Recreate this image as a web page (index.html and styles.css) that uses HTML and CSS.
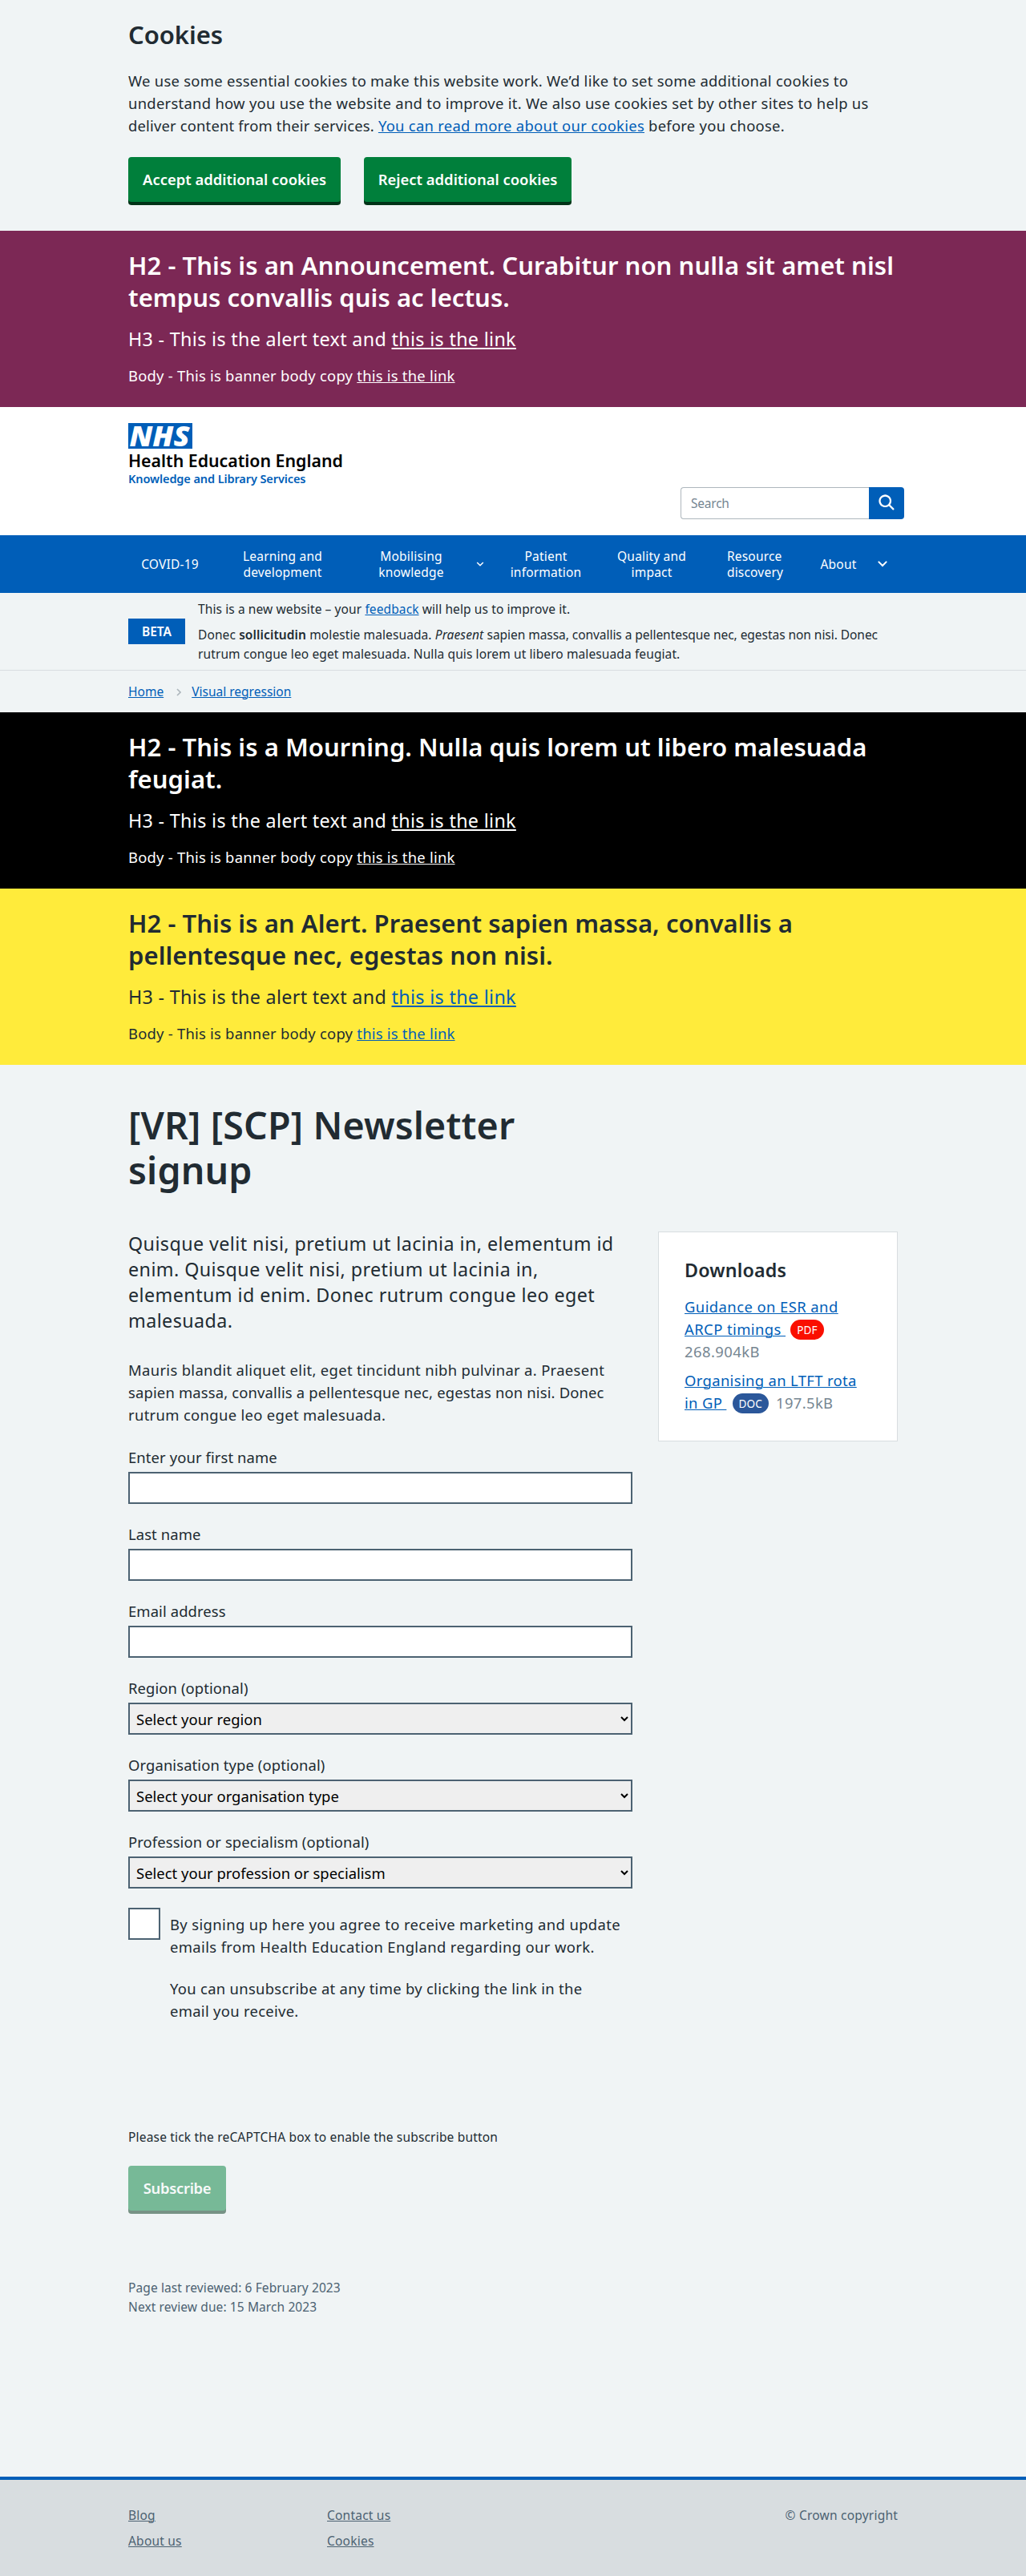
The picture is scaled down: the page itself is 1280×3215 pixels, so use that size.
FILE: index.html
```
<!DOCTYPE html>
<html lang="en">
<head>
<meta charset="utf-8">
<title>[VR] [SCP] Newsletter signup</title>
<link rel="stylesheet" href="styles.css">
</head>
<body>
<section class="cookies">
  <div class="container">
    <h2 class="heading">Cookies</h2>
    <p class="body-text">We use some essential cookies to make this website work. We’d like to set some additional cookies to understand how you use the website and to improve it. We also use cookies set by other sites to help us <span class="tight">deliver content from their services.</span> <a href="#">You can read more about our cookies</a> before you choose.</p>
    <div class="cookie-actions">
      <button class="button" type="button">Accept additional cookies</button>
      <button class="button reject" type="button">Reject additional cookies</button>
    </div>
  </div>
</section>

<section class="banner announcement">
  <div class="container">
    <h2 class="heading">H2 - This is an Announcement. Curabitur non nulla sit amet nisl tempus convallis quis ac lectus.</h2>
    <h3 class="banner-lead">H3 - This is the alert text and <a href="#">this is the link</a></h3>
    <p class="banner-body">Body - This is banner body copy <a href="#">this is the link</a></p>
  </div>
</section>

<header class="header">
  <div class="container header-row">
    <a class="logo" href="#">
      <svg width="80" height="32" viewBox="0 0 80 32" role="img" aria-label="NHS">
        <rect width="80" height="32" fill="#005eb8"/>
        <text class="logo-mark" x="1.5" y="29" textLength="75" lengthAdjust="spacingAndGlyphs">NHS</text>
      </svg>
      <span class="logo-org">Health Education England</span>
      <span class="logo-service">Knowledge and Library Services</span>
    </a>
    <form class="search">
      <input class="search-input" type="search" placeholder="Search" aria-label="Search">
      <button class="search-button" type="button" aria-label="Submit search">
        <svg width="27" height="27" viewBox="0 0 24 24" fill="#fff"><path d="M19.71 18.29l-4.11-4.1a7 7 0 1 0-1.41 1.41l4.1 4.11a1 1 0 0 0 1.42 0 1 1 0 0 0 0-1.42zM5 10a5 5 0 1 1 5 5 5 5 0 0 1-5-5z"/></svg>
      </button>
    </form>
  </div>
</header>

<nav class="nav">
  <ul class="container nav-list">
    <li>COVID-19</li>
    <li>Learning and<br>development</li>
    <li>Mobilising<br>knowledge</li>
    <li><svg width="10" height="6" viewBox="0 0 10 6" fill="none" stroke="#fff" stroke-width="1.5"><path d="M1.2 1l3.8 3.8L8.8 1"/></svg></li>
    <li>Patient<br>information</li>
    <li>Quality and<br>impact</li>
    <li class="left">Resource<br>discovery</li>
    <li>About</li>
    <li><svg width="12" height="8" viewBox="0 0 12 8" fill="none" stroke="#fff" stroke-width="2" stroke-linecap="round"><path d="M1.4 1.4L6 6l4.600-4.600"/></svg></li>
  </ul>
</nav>

<section class="phase">
  <div class="container phase-row">
    <strong class="tag">BETA</strong>
    <div>
      <p class="phase-first">This is a new website – your <a href="#">feedback</a> will help us to improve it.</p>
      <p>Donec <b>sollicitudin</b> molestie malesuada. <em>Praesent</em> <span class="tight">sapien massa, convallis a pellentesque nec, egestas non nisi. Donec</span> rutrum congue leo eget malesuada. Nulla quis lorem ut libero malesuada feugiat.</p>
    </div>
  </div>
</section>

<nav class="breadcrumb">
  <div class="container breadcrumb-row">
    <a href="#">Home</a>
    <svg width="6" height="10" viewBox="0 0 6 10" fill="none" stroke="#aeb7bd" stroke-width="1.6"><path d="M1 1l4 4-4 4"/></svg>
    <a href="#">Visual regression</a>
  </div>
</nav>

<section class="banner mourning">
  <div class="container">
    <h2 class="heading">H2 - This is a Mourning. Nulla quis lorem ut libero malesuada feugiat.</h2>
    <h3 class="banner-lead">H3 - This is the alert text and <a href="#">this is the link</a></h3>
    <p class="banner-body">Body - This is banner body copy <a href="#">this is the link</a></p>
  </div>
</section>

<section class="banner alert">
  <div class="container">
    <h2 class="heading">H2 - This is an Alert. Praesent sapien massa, convallis a pellentesque nec, egestas non nisi.</h2>
    <h3 class="banner-lead">H3 - This is the alert text and <a href="#">this is the link</a></h3>
    <p class="banner-body">Body - This is banner body copy <a href="#">this is the link</a></p>
  </div>
</section>

<main class="container main">
  <h1 class="page-title">[VR] [SCP] Newsletter signup</h1>
  <div class="columns">
    <div class="content">
      <p class="lede">Quisque velit nisi, pretium ut lacinia in, elementum id enim. Quisque velit nisi, pretium ut lacinia in, elementum id enim. Donec rutrum congue leo eget malesuada.</p>
      <p class="intro">Mauris blandit aliquet elit, eget tincidunt nibh pulvinar a. Praesent <span class="tight">sapien massa, convallis a pellentesque nec, egestas non nisi. Donec</span> rutrum congue leo eget malesuada.</p>
      <form>
        <div class="field"><label for="first">Enter your first name</label><input class="control" id="first" type="text"></div>
        <div class="field"><label for="last">Last name</label><input class="control" id="last" type="text"></div>
        <div class="field"><label for="email">Email address</label><input class="control" id="email" type="email"></div>
        <div class="field"><label for="region">Region (optional)</label><select class="control" id="region"><option>Select your region</option></select></div>
        <div class="field"><label for="org">Organisation type (optional)</label><select class="control" id="org"><option>Select your organisation type</option></select></div>
        <div class="field"><label for="prof">Profession or specialism (optional)</label><select class="control" id="prof"><option>Select your profession or specialism</option></select></div>
        <div class="consent">
          <input class="checkbox" type="checkbox" id="consent">
          <label class="consent-text" for="consent"><span>By signing up here you agree to receive marketing and update emails from Health Education England regarding our work.</span><span>You can unsubscribe at any time by clicking the link in the email you receive.</span></label>
        </div>
        <p class="captcha-note">Please tick the reCAPTCHA box to enable the subscribe button</p>
        <button class="button subscribe" type="button" disabled>Subscribe</button>
      </form>
      <p class="review">Page last reviewed: 6 February 2023<br>Next review due: 15 March 2023</p>
    </div>
    <aside class="downloads">
      <h2 class="downloads-title">Downloads</h2>
      <p class="download"><a href="#">Guidance on ESR and ARCP timings&nbsp;</a> <span class="pill pdf">PDF</span> <span class="size">268.904kB</span></p>
      <p class="download"><a href="#">Organising an LTFT rota in GP&nbsp;</a> <span class="pill doc">DOC</span> <span class="size">197.5kB</span></p>
    </aside>
  </div>
</main>

<footer class="footer">
  <div class="container footer-row">
    <ul class="footer-links">
      <li><a href="#">Blog</a></li>
      <li><a href="#">Contact us</a></li>
      <li><a href="#">About us</a></li>
      <li><a href="#">Cookies</a></li>
    </ul>
    <p>© Crown copyright</p>
  </div>
</footer>
</body>
</html>
```
FILE: styles.css
```
* { box-sizing: border-box; }
body {
  margin: 0;
  background: #f0f4f5;
  color: #212b32;
  font: 18.43px/28px "Noto Sans", "Open Sans", sans-serif;
  letter-spacing: 0.015em;
}
h1, h2, h3, p, ul { margin: 0; padding: 0; }
ul { list-style: none; }
a { color: #005eb8; text-underline-offset: 1px; text-decoration-thickness: 1px; }
svg { display: block; }
b, strong { font-weight: 600; }
.container { width: 960px; margin: 0 auto; }

.heading { font-size: 31.04px; line-height: 40px; font-weight: 600; letter-spacing: 0.0015em; }

.cookies { padding: 23px 0 35px; }
.cookies .heading { margin-bottom: 24px; letter-spacing: -0.003em; }
.body-text { letter-spacing: 0.0148em; }
.body-text .tight { letter-spacing: 0.009em; }
.cookie-actions { display: flex; gap: 29px; margin-top: 25px; }
.button {
  width: 265px;
  height: 56px;
  margin: 0 0 1px;
  padding: 0 0 1px;
  border: 0;
  border-radius: 4px;
  background: #007f3b;
  box-shadow: 0 4px 0 #003317;
  color: #fff;
  font: 600 18.43px/28px "Noto Sans", sans-serif;
  letter-spacing: 0;
}
.button.reject { width: 259px; }

.banner { height: 220px; padding-top: 23px; color: #fff; }
.banner a { color: inherit; }
.banner-lead {
  margin: 16px 0;
  font-size: 23.28px;
  line-height: 32px;
  font-weight: 400;
  letter-spacing: 0.0146em;
}
.banner-lead a { text-decoration-thickness: 2px; text-underline-offset: 2px; }
.banner-body { letter-spacing: 0.0122em; }
.announcement { background: #7c2855; }
.mourning { background: #000; }
.alert { background: #ffeb3b; color: #212b32; }
.alert a { color: #005eb8; }

.header { height: 160px; background: #fff; }
.header-row { display: flex; justify-content: space-between; padding-top: 20px; }
.logo { display: flex; flex-direction: column; text-decoration: none; }
.logo-mark { fill: #fff; font: italic 900 36px "Noto Sans", sans-serif; letter-spacing: 0; }
.logo-org { margin-top: 1px; color: #000; font-size: 21.34px; line-height: 28px; font-weight: 600; letter-spacing: -0.001em; }
.logo-service { margin-top: -1px; font-size: 14.55px; line-height: 18px; font-weight: 600; letter-spacing: -0.008em; }
.search { display: flex; margin: 80px -8px 0 0; }
.search-input {
  width: 235px;
  height: 40px;
  padding: 0 12px;
  border: 1px solid #aeb7bd;
  border-right: 0;
  border-radius: 4px 0 0 4px;
  background: #fff;
  font: 15.52px "Noto Sans", sans-serif;
  letter-spacing: -0.015em;
}
.search-input::placeholder { color: #768692; opacity: 1; }
.search-button {
  display: grid;
  place-items: center;
  width: 44px;
  height: 40px;
  padding: 0 0 1px;
  border: 0;
  border-radius: 0 4px 4px 0;
  background: #005eb8;
}

.nav { background: #005eb8; color: #fff; font-size: 15.52px; line-height: 20px; letter-spacing: 0.0125em; }
.nav-list {
  display: grid;
  grid-template-columns: 104px 177px 144px 27px 138px 126px 132px 76px 34px;
  align-items: center;
  height: 72px;
}
.nav-list li { display: grid; justify-content: center; text-align: center; }
.nav-list .left { text-align: left; }

.phase { padding: 8px 0; border-bottom: 1px solid #d8dde0; font-size: 15.52px; line-height: 24px; letter-spacing: 0.0063em; }
.phase-row { display: flex; align-items: center; gap: 16px; }
.phase-first { margin-bottom: 8px; }
.phase .tight { letter-spacing: -0.0035em; }
.tag {
  flex: 0 0 71px;
  height: 32px;
  background: #005eb8;
  color: #fff;
  line-height: 32px;
  text-align: center;
  letter-spacing: 0;
}
.breadcrumb { font-size: 15.52px; line-height: 24px; letter-spacing: 0; }
.breadcrumb-row { display: flex; align-items: center; gap: 13px; height: 52px; }
.breadcrumb-row svg { margin: 2px 0 0 3px; }

.main { padding-top: 47px; }
.page-title { width: 630px; font-size: 46.56px; line-height: 56px; font-weight: 600; letter-spacing: 0.003em; }
.columns { display: flex; justify-content: space-between; align-items: flex-start; margin-top: 48px; }
.content { width: 629px; }
.lede { font-size: 23.28px; line-height: 32px; letter-spacing: 0.0188em; }
.intro { margin: 32px 0 25px; letter-spacing: 0.0177em; }
.intro .tight { letter-spacing: 0.0085em; }
.field { margin-bottom: 24px; letter-spacing: 0.0055em; }
.field label { display: block; margin-bottom: 4px; }
.control {
  display: block;
  width: 629px;
  height: 40px;
  padding: 0 4px;
  border: 2px solid #4c6272;
  border-radius: 0;
  background: #fff;
  font: 18.43px "Noto Sans", sans-serif;
  letter-spacing: 0.001em;
}
select.control { background: #efefef; color: #000; }
.consent { display: flex; gap: 12px; height: 143px; }
.checkbox {
  appearance: none;
  flex: none;
  width: 40px;
  height: 40px;
  margin: 0;
  border: 2px solid #4c6272;
  background: #fff;
}
.consent-text { display: flex; flex-direction: column; gap: 24px; width: 566px; padding-top: 7px; letter-spacing: 0.02em; }
.consent-text span + span { letter-spacing: 0.016em; }
.captcha-note { margin-top: 131px; font-size: 15.52px; line-height: 24px; letter-spacing: 0.0112em; }
.button.subscribe { display: block; width: 122px; margin-top: 24px; opacity: 0.5; letter-spacing: -0.0155em; }
.review { margin-top: 84px; color: #4c6272; font-size: 15.52px; line-height: 24px; letter-spacing: 0.006em; }

.downloads { width: 299px; margin-top: 1px; padding: 31px 32px 33px; border: 1px solid #d8dde0; background: #fff; }
.downloads-title { margin-bottom: 16px; font-size: 23.28px; line-height: 32px; font-weight: 600; letter-spacing: 0.007em; }
.download { letter-spacing: 0.023em; }
.download + .download { margin-top: 8px; letter-spacing: 0.019em; }
.pill {
  display: inline-block;
  height: 25px;
  margin: 0 4px 0 1px;
  padding: 0 8px;
  border-radius: 13px;
  color: #fff;
  font-size: 13.58px;
  line-height: 25px;
  letter-spacing: 0.0068em;
  vertical-align: 1px;
}
.pdf { background: #fa0f00; }
.doc { margin-left: 2px; background: #2b579a; }
.size { color: #768692; }

.footer { height: 124px; margin-top: 200px; padding-top: 32px; border-top: 4px solid #005eb8; background: #d8dde0; color: #4c6272; font-size: 15.52px; line-height: 24px; letter-spacing: 0.0135em; }
.footer a { color: inherit; }
.footer-row { display: flex; justify-content: space-between; }
.footer-links { display: grid; grid-template-columns: 248px 248px; row-gap: 8px; }
```
